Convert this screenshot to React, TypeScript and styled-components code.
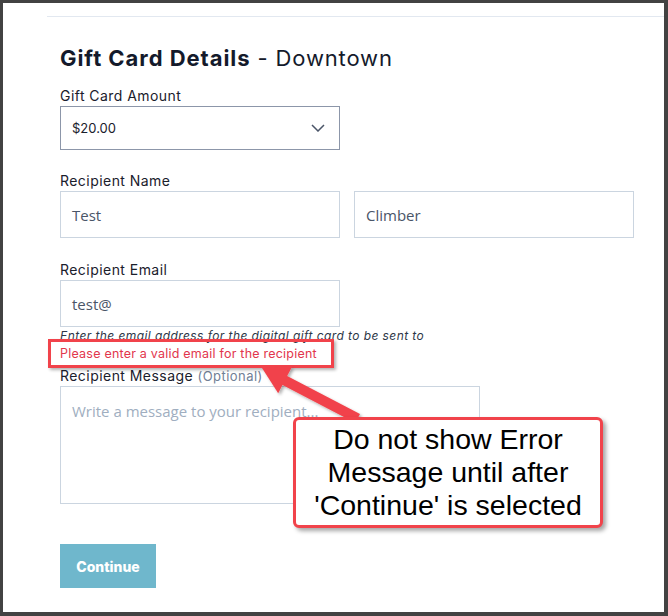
import React from "react";
import styled, { createGlobalStyle } from "styled-components";

const Global = createGlobalStyle`
  html, body { margin: 0; padding: 0; background: #424242; }
  body { width: 668px; height: 616px; overflow: hidden; }
  * { box-sizing: border-box; }
`;

const UI = `Inter, "Noto Sans", sans-serif`;
const SYS = `"Open Sans", "Noto Sans", sans-serif`;

const Frame = styled.div`
  position: relative;
  margin: 3px 4px 4px 3px;
  width: 661px;
  height: 609px;
  background: #ffffff;
  padding-top: 13px;
  font-family: ${UI};
  color: #1a202c;
  overflow: hidden;
`;

const Divider = styled.div`
  margin-left: 44px;
  height: 1px;
  background: #e2e8f0;
`;

const Form = styled.form`
  margin: 0;
  padding: 26px 0 0 57px;
  display: flex;
  flex-direction: column;
`;

const Title = styled.h2`
  margin: 0 0 13px;
  font-size: 22px;
  line-height: 30px;
  font-weight: 400;
  letter-spacing: 0.85px;
  color: #141a2b;
  b { font-weight: 700; letter-spacing: 0.95px; }
`;

const Field = styled.div<{ $gap?: number }>`
  display: flex;
  flex-direction: column;
  margin-bottom: ${(p) => p.$gap ?? 21}px;
`;

const Label = styled.label`
  font-size: 14px;
  line-height: 20px;
  letter-spacing: 0.45px;
  color: #1a202c;
  span { color: #718096; font-size: 13px; }
`;

const SelectBox = styled.div`
  width: 280px;
  height: 44px;
  border: 1px solid #8c96a9;
  display: flex;
  align-items: center;
  justify-content: space-between;
  padding: 0 14px 0 11px;
  font-size: 13px;
  color: #1a202c;
`;

const Row = styled.div`
  display: grid;
  grid-template-columns: 280px 280px;
  gap: 14px;
`;

const Input = styled.div`
  width: 280px;
  height: 47px;
  border: 1px solid #cbd5e0;
  display: flex;
  align-items: center;
  padding: 0 11px;
  font-family: ${SYS};
  font-size: 15px;
  color: #4a5568;
`;

const Help = styled.div`
  font-size: 12px;
  line-height: 16px;
  font-style: italic;
  letter-spacing: 0.42px;
  color: #2d3748;
  margin-top: 1px;
`;

const ErrorText = styled.div`
  font-size: 12.5px;
  line-height: 16px;
  letter-spacing: 0.22px;
  color: #e2364c;
  margin-top: 2px;
`;

const TextArea = styled.div`
  width: 420px;
  height: 118px;
  border: 1px solid #cbd5e0;
  padding: 14px 11px;
  font-family: ${SYS};
  font-size: 15px;
  line-height: 20px;
  color: #a0aec0;
`;

const Actions = styled.div`
  margin-top: 40px;
`;

const Button = styled.button`
  width: 96px;
  height: 44px;
  border: none;
  background: #6fb7cc;
  color: #ffffff;
  font-family: ${UI};
  font-weight: 800;
  font-size: 14px;
  padding: 0;
`;

const HighlightBox = styled.div`
  position: absolute;
  left: 45px;
  top: 336px;
  width: 286px;
  height: 29px;
  border: 3px solid #f1434b;
  box-shadow: 2px 2px 3px rgba(0, 0, 0, 0.3);
`;

const ArrowLayer = styled.svg`
  position: absolute;
  left: 0;
  top: 0;
  pointer-events: none;
`;

const Callout = styled.div`
  position: absolute;
  left: 290px;
  top: 414px;
  width: 310px;
  height: 111px;
  background: #ffffff;
  border: 3px solid #f1434b;
  border-radius: 6px;
  box-shadow: 3px 3px 4px rgba(0, 0, 0, 0.35);
  display: flex;
  align-items: center;
  justify-content: center;
  text-align: center;
  font-family: "Liberation Sans", Arial, sans-serif;
  font-size: 28.5px;
  line-height: 33px;
  color: #000000;
`;

const Chevron = () => (
  <svg width="14" height="8" viewBox="0 0 14 8">
    <path d="M1 1 L7 7 L13 1" fill="none" stroke="#4a5568" strokeWidth="1.5" />
  </svg>
);

export default function App() {
  return (
    <>
      <Global />
      <Frame>
        <Divider />
        <Form>
          <Title>
            <b>Gift Card Details</b> - Downtown
          </Title>
          <Field>
            <Label>Gift Card Amount</Label>
            <SelectBox>
              <span>$20.00</span>
              <Chevron />
            </SelectBox>
          </Field>
          <Field $gap={22}>
            <Label>Recipient Name</Label>
            <Row>
              <Input>Test</Input>
              <Input>Climber</Input>
            </Row>
          </Field>
          <Field $gap={4}>
            <Label>Recipient Email</Label>
            <Input>test@</Input>
            <Help>Enter the email address for the digital gift card to be sent to</Help>
            <ErrorText>Please enter a valid email for the recipient</ErrorText>
          </Field>
          <Field $gap={0}>
            <Label>
              Recipient Message <span>(Optional)</span>
            </Label>
            <TextArea>Write a message to your recipient...</TextArea>
          </Field>
          <Actions>
            <Button type="button">Continue</Button>
          </Actions>
        </Form>
        <HighlightBox />
        <ArrowLayer width="661" height="609" viewBox="3 3 661 609">
          <defs>
            <filter id="sh" x="-20%" y="-20%" width="140%" height="140%">
              <feDropShadow dx="2" dy="2" stdDeviation="1.5" floodColor="#000" floodOpacity="0.3" />
            </filter>
          </defs>
          <g filter="url(#sh)" fill="#f1434b">
            <polygon points="360,414 355.4,422.9 281.6,384.5 286.2,375.6" />
            <polygon points="262,368 292,366.7 278.2,393.3" />
          </g>
        </ArrowLayer>
        <Callout>
          Do not show Error
          <br />
          Message until after
          <br />
          'Continue' is selected
        </Callout>
      </Frame>
    </>
  );
}
